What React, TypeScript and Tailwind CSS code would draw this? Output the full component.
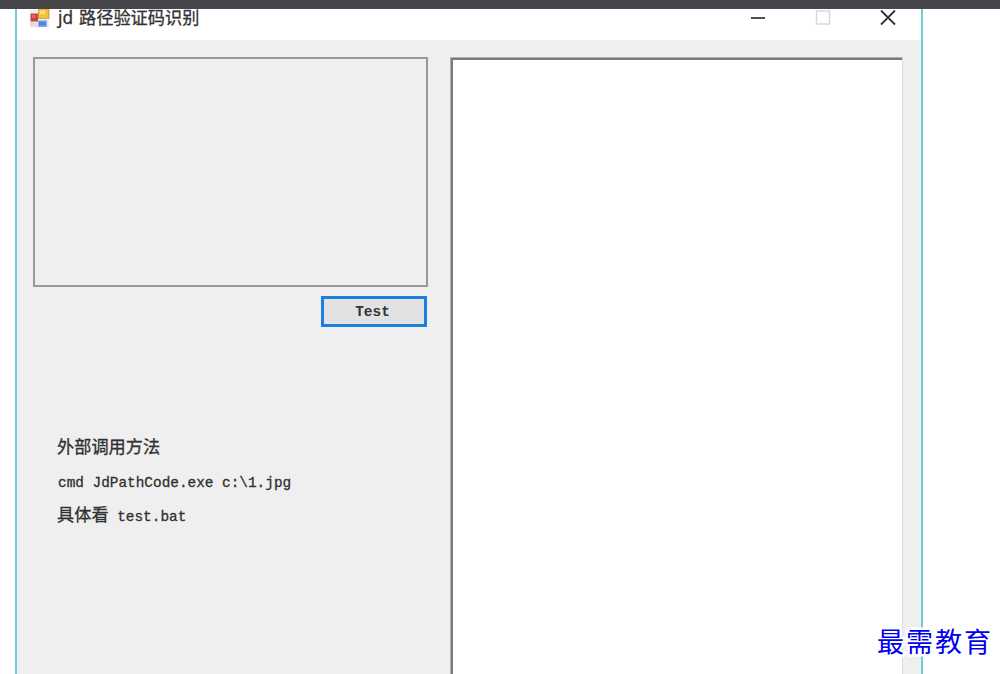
import React from 'react';

const AppIcon: React.FC = () => (
  <svg className="w-[20px] h-[20px] flex-shrink-0" viewBox="0 0 20 20">
    <rect x="0" y="1" width="19" height="17.5" fill="#f1efed" />
    <rect x="0.5" y="4.5" width="7.5" height="8" fill="#c4443f" />
    <rect x="2" y="6" width="3.5" height="3" fill="#dd6a60" />
    <rect x="0.5" y="13" width="6.5" height="4.5" fill="#dddee2" />
    <rect x="8" y="0" width="11.5" height="10" fill="#d6a548" />
    <rect x="9" y="0.5" width="9" height="8.5" fill="#f3c237" />
    <rect x="10" y="1.5" width="5" height="3.5" fill="#fbe08a" />
    <rect x="8" y="11.5" width="9" height="6.5" fill="#82aae8" />
    <rect x="9" y="12.5" width="6.5" height="4" fill="#4c87de" />
  </svg>
);

const TitleBar: React.FC = () => (
  <div className="h-[31px] flex-shrink-0 flex items-start bg-white">
    <div className="flex items-start pl-[13px]">
      <AppIcon />
      <span className="ml-[8px] h-[18px] leading-[18px] whitespace-pre text-[17.2px] text-[#333333] [-webkit-text-stroke:0.3px_#333333] font-['Noto_Sans','Noto_Sans_CJK_SC',sans-serif]">
        jd<span className="ml-[6px]">路径验证码识别</span>
      </span>
    </div>
    <div className="ml-auto flex items-start pr-[25px]">
      <svg className="w-[16px] h-[18px] mr-[49px]" viewBox="0 0 16 18">
        <path d="M1 9H15" stroke="#3c3c3c" strokeWidth="1.8" />
      </svg>
      <svg className="w-[16px] h-[18px] mr-[49px]" viewBox="0 0 16 18">
        <rect x="1.5" y="2" width="13" height="13" fill="none" stroke="#d6d6d6" strokeWidth="1.4" />
      </svg>
      <svg className="w-[16px] h-[18px]" viewBox="0 0 16 18">
        <path d="M1 1.5L15 15.5M15 1.5L1 15.5" stroke="#333333" strokeWidth="1.8" />
      </svg>
    </div>
  </div>
);

const App: React.FC = () => {
  return (
    <div className="relative w-[1000px] h-[674px] flex flex-col bg-white overflow-hidden">
      <div className="h-[9px] flex-shrink-0 bg-[#47464b]" />

      <div className="ml-[15px] w-[908px] flex-1 min-h-0 flex flex-col border-x-2 border-[#72cbd9]">
        <TitleBar />

        <div className="flex-1 min-h-0 flex bg-[#efefef] pt-[17px] pl-[16px]">
          <div className="w-[395px] flex flex-col">
            <div className="h-[230px] border-2 border-[#999999]" />
            <button className="self-end mt-[9px] mr-[1px] w-[106px] h-[31px] pt-[1px] pr-[3px] border-[3px] border-[#1b80dc] bg-[#e2e2e2] text-[14.4px] leading-none font-bold text-[#333333] font-['Liberation_Mono',monospace]">
              Test
            </button>

            <div className="mt-[105px] pl-[24px] whitespace-pre text-[#303030] text-[14.4px] [-webkit-text-stroke:0.3px_#303030] font-['Liberation_Mono','Noto_Sans_CJK_SC',monospace]">
              <p className="h-[34px] leading-[34px] text-[17.2px]">外部调用方法</p>
              <p className="h-[34px] leading-[34px] pl-[1px]">{'cmd JdPathCode.exe c:\\1.jpg'}</p>
              <p className="h-[34px] leading-[34px]">
                <span className="text-[17.2px]">具体看</span> test.bat
              </p>
            </div>
          </div>

          {/* sunken text box: light outer edge, dark inner edge */}
          <div className="ml-[22px] w-[453px] flex border-t border-l border-r border-t-[#b0b0b0] border-l-[#b0b0b0] border-r-[#dedede]">
            <div className="flex-1 border-t-2 border-l-2 border-[#7a7a7a] bg-white" />
          </div>
        </div>
      </div>

      {/* watermark */}
      <div className="absolute left-[877px] top-[623px] text-[27px] leading-[36px] tracking-[2px] whitespace-nowrap font-normal text-[#0000f0] font-['Noto_Sans_CJK_SC',sans-serif] [paint-order:stroke_fill] [-webkit-text-stroke:5px_white]">
        最需教育
      </div>
    </div>
  );
};

export default App;
